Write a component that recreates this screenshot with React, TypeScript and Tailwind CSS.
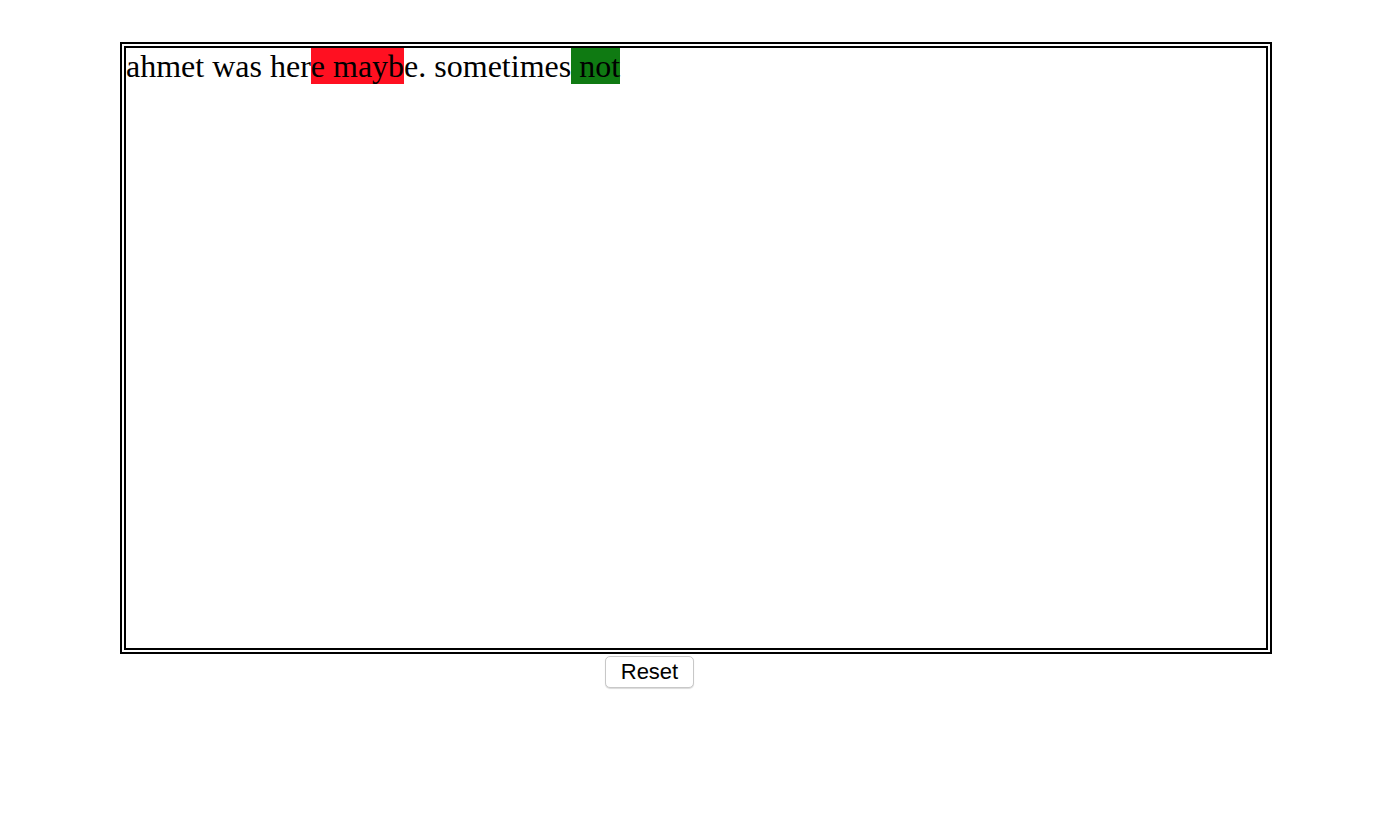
import React from 'react';

export default function App() {
    return (
        <div className="min-h-screen bg-white pt-[42px] pl-[120px]">
            <div
                className="w-[1152px] h-[612px] border-[6px] border-double border-black text-[32px] leading-[1.15] text-black"
                style={{ fontFamily: '"Liberation Serif", "Times New Roman", serif' }}
            >
                ahmet was her<span className="bg-[#ff1021]">e mayb</span>e. sometimes<span className="bg-[#0f7a12]"> not</span>
            </div>
            <div className="mt-[2px] pl-[485px]">
                <button
                    className="w-[89px] h-[32px] rounded-[5px] border border-[#c8c8c8] bg-white text-[22px] leading-none text-black shadow-[0_1px_1px_rgba(0,0,0,0.15)]"
                    style={{ fontFamily: '"Liberation Sans", Arial, sans-serif' }}
                >
                    Reset
                </button>
            </div>
        </div>
    );
}
